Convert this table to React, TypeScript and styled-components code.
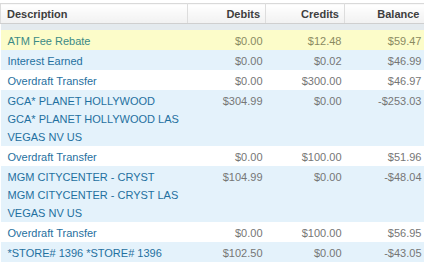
import React from "react";
import styled, { createGlobalStyle } from "styled-components";

const Global = createGlobalStyle`
  html, body { margin: 0; padding: 0; background: #ffffff; }
  body { font-family: "Liberation Sans", Arial, sans-serif; }
`;

const Page = styled.div`
  width: 424px;
  height: 262px;
  overflow: hidden;
  padding-top: 3px;
  box-sizing: border-box;
`;

const Table = styled.table`
  width: 424px;
  border-collapse: collapse;
  table-layout: fixed;
  font-size: 11px;
`;

const HeadCell = styled.th<{ $align?: "left" | "right" }>`
  height: 19px;
  padding: 0 ${(p) => (p.$align === "right" ? "5px" : "3px")} 0 ${(p) => (p.$align === "right" ? "3px" : "6px")};
  text-align: ${(p) => p.$align ?? "left"};
  font-weight: bold;
  font-size: 11px;
  color: #3e3e3e;
  background: linear-gradient(#ffffff, #f1f1f1);
  border-top: 1px solid #d9d9d9;
  border-bottom: 1px solid #cfcfcf;
  border-right: 1px solid #dddddd;
  &:first-child { border-left: 1px solid #dcdcdc; }
  &:last-child { border-right: none; }
`;

const SpacerCell = styled.td`
  height: 6px;
  padding: 0;
  background: #e4eaee;
`;

const Row = styled.tr<{ $tone: "yellow" | "blue" | "white" }>`
  background: ${(p) =>
    p.$tone === "yellow" ? "#fcfcc9" : p.$tone === "blue" ? "#e4f2fb" : "#ffffff"};
`;

const DescCell = styled.td<{ $hl?: boolean }>`
  vertical-align: top;
  padding: 2px 3px 0 7px;
  line-height: 18px;
  color: ${(p) => (p.$hl ? "#3b8a86" : "#1f70a0")};
`;

const AmountCell = styled.td<{ $hl?: boolean }>`
  vertical-align: top;
  text-align: right;
  padding: 2px 3px 0 3px;
  line-height: 18px;
  white-space: nowrap;
  color: ${(p) => (p.$hl ? "#8a8a62" : "#767676")};
`;

const Line = styled.div``;

type Tx = {
  desc: string[];
  debit: string;
  credit: string;
  balance: string;
  tone: "yellow" | "blue" | "white";
};

const rows: Tx[] = [
  { desc: ["ATM Fee Rebate"], debit: "$0.00", credit: "$12.48", balance: "$59.47", tone: "yellow" },
  { desc: ["Interest Earned"], debit: "$0.00", credit: "$0.02", balance: "$46.99", tone: "blue" },
  { desc: ["Overdraft Transfer"], debit: "$0.00", credit: "$300.00", balance: "$46.97", tone: "white" },
  {
    desc: ["GCA* PLANET HOLLYWOOD", "GCA* PLANET HOLLYWOOD LAS VEGAS NV US"],
    debit: "$304.99",
    credit: "$0.00",
    balance: "-$253.03",
    tone: "blue",
  },
  { desc: ["Overdraft Transfer"], debit: "$0.00", credit: "$100.00", balance: "$51.96", tone: "white" },
  {
    desc: ["MGM CITYCENTER - CRYST", "MGM CITYCENTER - CRYST LAS VEGAS NV US"],
    debit: "$104.99",
    credit: "$0.00",
    balance: "-$48.04",
    tone: "blue",
  },
  { desc: ["Overdraft Transfer"], debit: "$0.00", credit: "$100.00", balance: "$56.95", tone: "white" },
  { desc: ["*STORE# 1396 *STORE# 1396"], debit: "$102.50", credit: "$0.00", balance: "-$43.05", tone: "blue" },
];

export default function App() {
  return (
    <>
      <Global />
      <Page>
        <Table>
          <colgroup>
            <col style={{ width: 187 }} />
            <col style={{ width: 78 }} />
            <col style={{ width: 79 }} />
            <col style={{ width: 80 }} />
          </colgroup>
          <thead>
            <tr>
              <HeadCell>Description</HeadCell>
              <HeadCell $align="right">Debits</HeadCell>
              <HeadCell $align="right">Credits</HeadCell>
              <HeadCell $align="right">Balance</HeadCell>
            </tr>
          </thead>
          <tbody>
            <tr>
              <SpacerCell colSpan={4} />
            </tr>
            {rows.map((r, i) => {
              const hl = r.tone === "yellow";
              return (
                <Row key={i} $tone={r.tone}>
                  <DescCell $hl={hl}>
                    {r.desc.map((d, j) => (
                      <Line key={j}>{d}</Line>
                    ))}
                  </DescCell>
                  <AmountCell $hl={hl}>{r.debit}</AmountCell>
                  <AmountCell $hl={hl}>{r.credit}</AmountCell>
                  <AmountCell $hl={hl}>{r.balance}</AmountCell>
                </Row>
              );
            })}
          </tbody>
        </Table>
      </Page>
    </>
  );
}
